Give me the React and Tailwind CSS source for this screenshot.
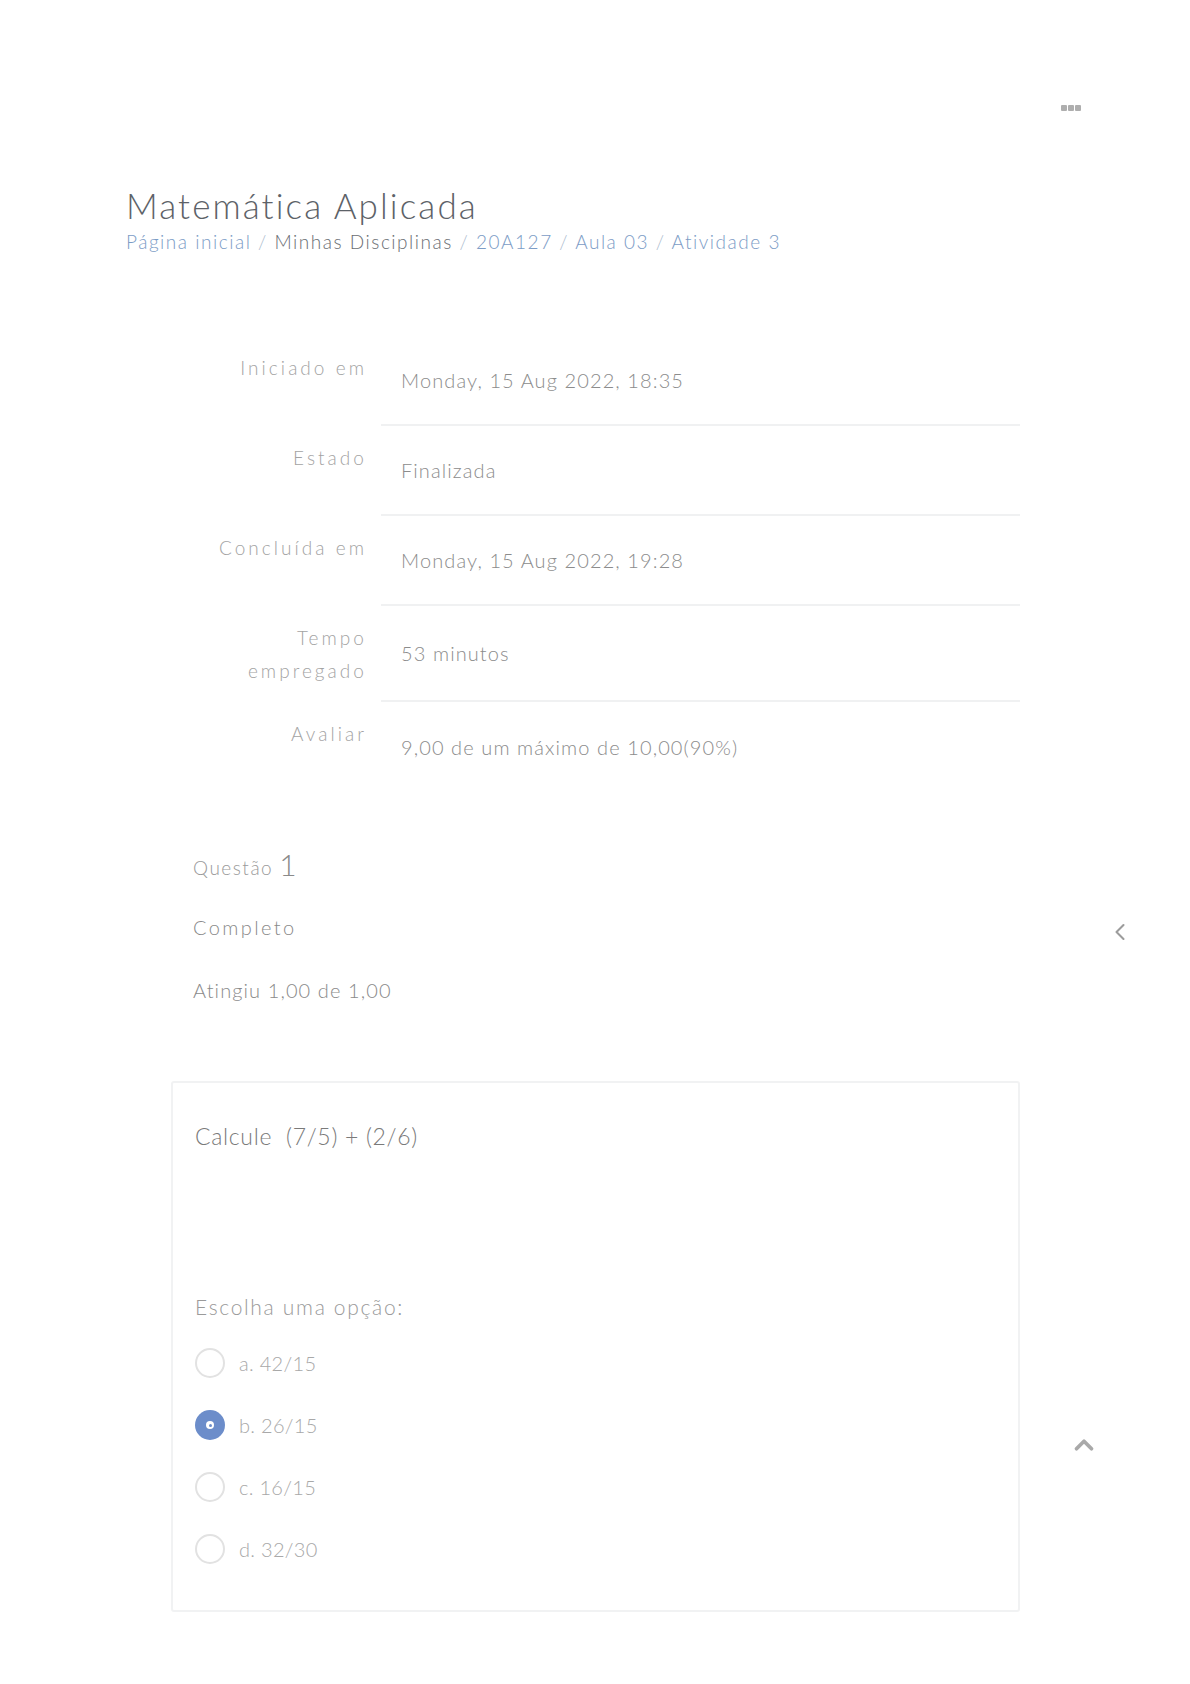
import { ChevronLeft, ChevronUp } from "lucide-react";

const rows = [
  { label: ["Iniciado em"], value: "Monday, 15 Aug 2022, 18:35" },
  { label: ["Estado"], value: "Finalizada" },
  { label: ["Concluída em"], value: "Monday, 15 Aug 2022, 19:28" },
  { label: ["Tempo", "empregado"], value: "53 minutos" },
  { label: ["Avaliar"], value: "9,00 de um máximo de 10,00(90%)", last: true },
];

const options = [
  { key: "a.", text: "42/15" },
  { key: "b.", text: "26/15", checked: true },
  { key: "c.", text: "16/15" },
  { key: "d.", text: "32/30" },
];

function Radio({ checked }) {
  if (checked) {
    return (
      <span className="w-[30px] h-[30px] rounded-full bg-[#6c8dca] flex items-center justify-center shrink-0">
        <span className="w-[8px] h-[8px] rounded-full bg-white flex items-center justify-center">
          <span className="w-[3px] h-[3px] rounded-full bg-[#6c8dca]" />
        </span>
      </span>
    );
  }
  return <span className="w-[30px] h-[30px] rounded-full border-2 border-[#e2e2e2] shrink-0" />;
}

export default function App() {
  return (
    <div className="relative w-full min-h-[1684px] bg-white font-['Lato',sans-serif] font-light">
      {/* top menu dots */}
      <div className="flex justify-end pt-[105px] pr-[109px]">
        <div className="flex gap-[1px]">
          <span className="w-[6px] h-[6px] rounded-[1px] bg-[#aeaeae]" />
          <span className="w-[6px] h-[6px] rounded-[1px] bg-[#aeaeae]" />
          <span className="w-[6px] h-[6px] rounded-[1px] bg-[#aeaeae]" />
        </div>
      </div>

      {/* heading */}
      <div className="pl-[126px] pt-[74px]">
        <h1 className="text-[35px] leading-[40px] font-light tracking-[0.06em] text-[#5d6268]">
          Matemática Aplicada
        </h1>
        <div className="mt-[3px] text-[19px] leading-[28px] tracking-[0.08em]">
          <span className="text-[#7c9cc6]">Página inicial</span>
          <span className="text-[#a9b9cc]"> / </span>
          <span className="text-[#6a6e73]">Minhas Disciplinas</span>
          <span className="text-[#a9b9cc]"> / </span>
          <span className="text-[#7c9cc6]">20A127</span>
          <span className="text-[#a9b9cc]"> / </span>
          <span className="text-[#7c9cc6]">Aula 03</span>
          <span className="text-[#a9b9cc]"> / </span>
          <span className="text-[#7c9cc6]">Atividade 3</span>
        </div>
      </div>

      {/* summary table */}
      <div className="ml-[126px] w-[894px] mt-[80px]">
        {rows.map((r) => (
          <div key={r.value} className="flex">
            <div className="w-[241px] shrink-0 py-[15px] text-right text-[19px] leading-[33px] tracking-[0.16em] text-[#a3a3a3]">
              {r.label.map((l) => (
                <div key={l}>{l}</div>
              ))}
            </div>
            <div
              className={
                "ml-[14px] flex-1 min-h-[90px] flex items-center pl-[20px] text-[20px] leading-[26px] tracking-[0.055em] text-[#8c8c8c] " +
                (r.last ? "" : "border-b-2 border-[#f0f1f2]")
              }
            >
              {r.value}
            </div>
          </div>
        ))}
      </div>

      {/* question info */}
      <div className="ml-[193px] mt-[52px] text-[#8a8a8a]">
        <div className="h-[36px] flex items-end">
          <span className="text-[19px] leading-[24px] tracking-[0.08em] text-[#9a9a9a]">Questão</span>
          <span className="ml-[6px] text-[30px] leading-[32px] font-light text-[#8a8a8a]">1</span>
        </div>
        <div className="mt-[34px] text-[20px] leading-[26px] tracking-[0.12em]">Completo</div>
        <div className="mt-[37px] text-[20px] leading-[26px] tracking-[0.055em]">Atingiu 1,00 de 1,00</div>
      </div>

      {/* question card */}
      <div className="ml-[171px] w-[849px] mt-[78px] border-2 border-[#f1f2f3] rounded-[3px] px-[22px] pt-[38px] pb-[46px]">
        <div className="text-[23px] leading-[30px] tracking-[0.03em] text-[#7a7a7a]">Calcule&nbsp; (7/5) + (2/6)</div>
        <div className="mt-[143px] text-[21px] leading-[26px] tracking-[0.08em] text-[#9a9a9a]">Escolha uma opção:</div>
        <div className="mt-[28px] flex flex-col gap-[32px]">
          {options.map((o) => (
            <label key={o.key} className="flex items-center gap-[14px] h-[30px]">
              <Radio checked={o.checked} />
              <span className="text-[20px] leading-[26px] tracking-[0.015em] text-[#a8a8a8]">
                {o.key} {o.text}
              </span>
            </label>
          ))}
        </div>
      </div>

      {/* side controls */}
      <ChevronLeft className="absolute left-[1106px] top-[918px] text-[#9c9c9c]" size={28} strokeWidth={1.8} />
      <ChevronUp className="absolute left-[1069px] top-[1430px] text-[#a9a9a9]" size={30} strokeWidth={3} />
    </div>
  );
}
